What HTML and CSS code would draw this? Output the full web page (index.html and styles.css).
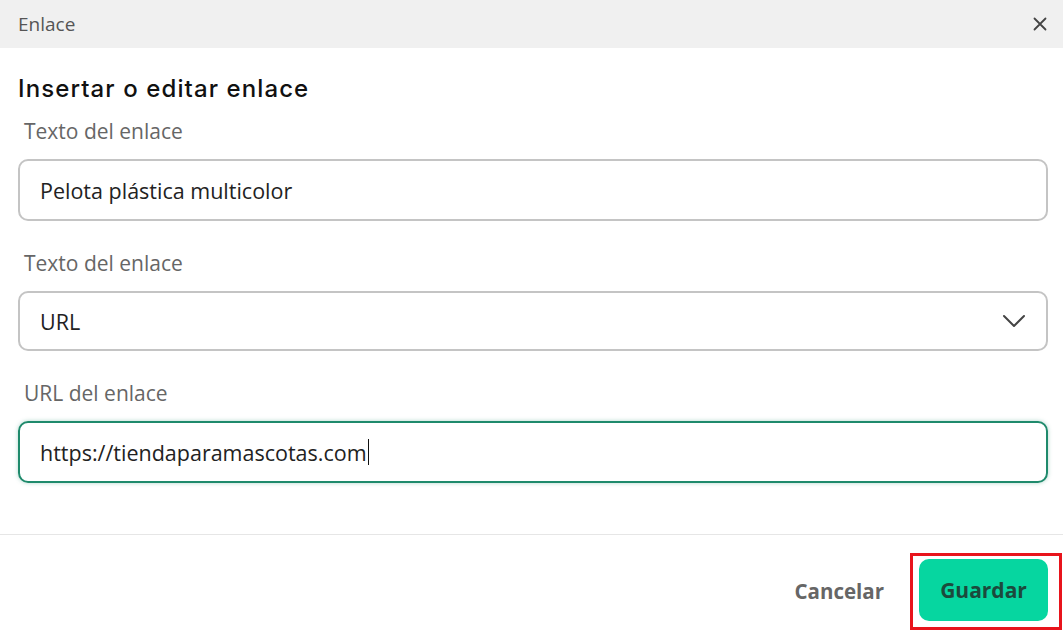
FILE: index.html
```html
<!DOCTYPE html>
<html lang="es">
<head>
  <meta charset="UTF-8" />
  <meta name="viewport" content="width=device-width, initial-scale=1.0">
  <title>Enlace</title>
  <link rel="stylesheet" href="styles.css">
</head>
<body>
  <div class="dialog">
    <div class="dialog-header">
      <span class="dialog-title">Enlace</span>
      <button class="close-btn" aria-label="Cerrar">
        <svg width="16" height="16" viewBox="0 0 16 16"><path d="M2.5 2.5l11 11M13.5 2.5l-11 11" stroke="#444" stroke-width="1.8" stroke-linecap="round" fill="none"/></svg>
      </button>
    </div>

    <div class="dialog-body">
      <h2>Insertar o editar enlace</h2>

      <label class="field-label">Texto del enlace</label>
      <div class="field">Pelota plástica multicolor</div>

      <label class="field-label">Texto del enlace</label>
      <div class="field select">
        <span>URL</span>
        <svg width="24" height="14" viewBox="0 0 24 14"><path d="M2 2l10 10L22 2" stroke="#444" stroke-width="2" stroke-linecap="round" stroke-linejoin="round" fill="none"/></svg>
      </div>

      <label class="field-label">URL del enlace</label>
      <div class="field focused">https://tiendaparamascotas.com<span class="caret"></span></div>
    </div>

    <div class="dialog-footer">
      <button class="btn-cancel">Cancelar</button>
      <span class="highlight">
        <button class="btn-save">Guardar</button>
      </span>
    </div>
  </div>
</body>
</html>
```

FILE: styles.css
```css
html, body {
  margin: 0;
  padding: 0;
  background-color: #FFFFFF;
  font-family: 'Open Sans', 'Noto Sans', sans-serif;
}
.dialog {
  width: 1063px;
  height: 636px;
  display: flex;
  flex-direction: column;
}
.dialog-header {
  height: 48px;
  background-color: #f0f0f0;
  display: flex;
  align-items: center;
  justify-content: space-between;
  padding: 0 14px 0 18px;
}
.dialog-title {
  font-size: 19px;
  color: #555;
}
.close-btn {
  background: none;
  border: none;
  padding: 0;
  width: 18px;
  height: 18px;
  display: flex;
  align-items: center;
  justify-content: center;
  cursor: pointer;
}
.dialog-body {
  padding: 26px 15px 0 18px;
  display: flex;
  flex-direction: column;
}
h2 {
  margin: 0 0 15px 0;
  font-family: 'Inter', sans-serif;
  font-weight: 500;
  font-size: 24px;
  letter-spacing: 1.1px;
  line-height: 30px;
  color: #111;
}
.field-label {
  font-size: 21px;
  line-height: 24px;
  color: #666;
  padding-left: 6px;
  margin-bottom: 16px;
}
.field {
  height: 62px;
  box-sizing: border-box;
  border: 2px solid #c4c4c4;
  border-radius: 10px;
  padding: 0 20px;
  display: flex;
  align-items: center;
  font-size: 21.5px;
  color: #222;
  margin-bottom: 30px;
}
.field.select {
  height: 60px;
  justify-content: space-between;
  padding-right: 20px;
}
.field.focused {
  border-color: #1f8a6c;
  box-shadow: 0 0 4px rgba(31, 138, 108, 0.35);
  margin-bottom: 0;
}
.caret {
  display: inline-block;
  width: 1px;
  height: 26px;
  background-color: #111;
  margin-left: 1px;
}
.dialog-footer {
  margin-top: 51px;
  border-top: 1px solid #e6e6e6;
  display: flex;
  justify-content: flex-end;
  align-items: center;
  padding: 18px 1px 0 0;
  gap: 26px;
}
.btn-cancel {
  background: none;
  border: none;
  font-family: 'Open Sans', sans-serif;
  font-weight: bold;
  font-size: 20.5px;
  color: #666;
  padding: 0 0 2px 0;
  cursor: pointer;
}
.highlight {
  display: inline-block;
  border: 3px solid #e8141c;
  padding: 3px 11px 6px 6px;
}
.btn-save {
  display: block;
  width: 129px;
  height: 62px;
  background-color: #06d6a0;
  border: none;
  border-radius: 10px;
  font-family: 'Open Sans', sans-serif;
  font-weight: bold;
  font-size: 21px;
  color: #1c4a3c;
  cursor: pointer;
}
```
